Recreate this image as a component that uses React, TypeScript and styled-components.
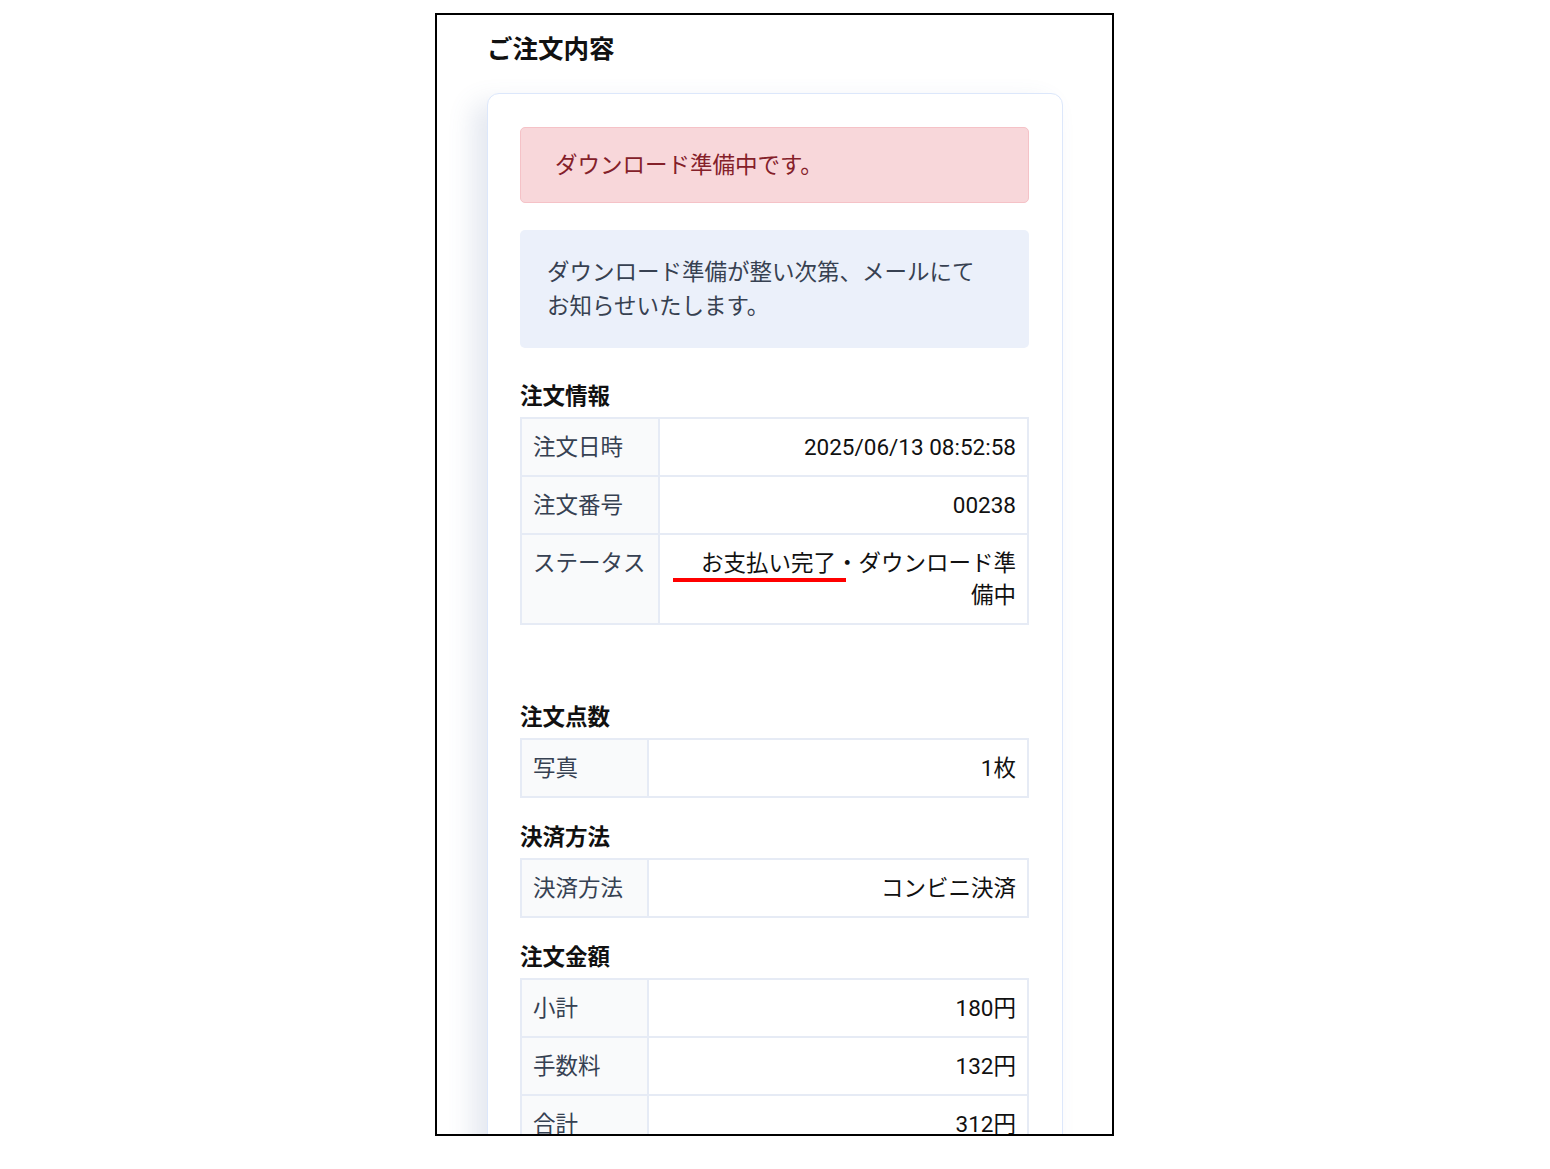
import React from 'react';
import styled, {createGlobalStyle} from 'styled-components';

const GlobalStyle = createGlobalStyle`
  body {
    margin: 0;
    background: #fff;
    font-family: Roboto, "Noto Sans CJK JP", sans-serif;
  }
`;

const Frame = styled.div`
  box-sizing: border-box;
  width: 679px;
  height: 1123px;
  margin: 13px 0 0 435px;
  border: 2px solid #000;
  overflow: hidden;
  padding: 0 49px 0 50px;
  background: #fff;
`;

const Title = styled.h1`
  margin: 16px 0 26px;
  font-size: 25.5px;
  line-height: 36px;
  font-weight: 700;
  color: #111;
`;

const Card = styled.div`
  border: 1px solid #dce7fb;
  border-radius: 12px;
  padding: 33px 33px 60px 32px;
  background: #fff;
  box-shadow: -14px 10px 26px rgba(90, 110, 160, 0.16);
`;

const Alert = styled.div<{$tone: 'danger' | 'info'}>`
  box-sizing: border-box;
  border-radius: 5px;
  font-size: 22.5px;
  line-height: 34px;
  ${(p) =>
    p.$tone === 'danger'
      ? `
    background: #f8d7da;
    border: 1px solid #f5c2c7;
    color: #842029;
    padding: 20px 34px;
  `
      : `
    background: #ebf0fa;
    color: #374151;
    padding: 25px 27px;
    margin-top: 27px;
  `}
`;

const Section = styled.section<{$gap: number}>`
  margin-top: ${(p) => p.$gap}px;
`;

const Heading = styled.h2`
  margin: 0 0 5px;
  font-size: 22.5px;
  line-height: 32px;
  font-weight: 700;
  color: #111;
`;

const Table = styled.table`
  width: 100%;
  border-collapse: collapse;
  font-size: 22.5px;
  line-height: 32px;
`;

const Label = styled.th`
  width: 25%;
  border: 2px solid #e6ebf5;
  background: #f9fafb;
  color: #364152;
  font-weight: 400;
  text-align: left;
  vertical-align: top;
  padding: 12px 12px 12px 11px;
  white-space: nowrap;
`;

const Value = styled.td`
  border: 2px solid #e6ebf5;
  color: #111;
  text-align: right;
  vertical-align: top;
  padding: 12px 11px 12px 20px;
`;

// red marker drawn under the payment status
const Marked = styled.span`
  position: relative;

  &::after {
    content: '';
    position: absolute;
    left: -28px;
    bottom: -6px;
    width: 173px;
    height: 4px;
    background: #f00;
  }
`;

type Row = {label: string; value: React.ReactNode};

const sections: {title: string; gap: number; rows: Row[]}[] = [
  {
    title: '注文情報',
    gap: 32,
    rows: [
      {label: '注文日時', value: '2025/06/13 08:52:58'},
      {label: '注文番号', value: '00238'},
      {
        label: 'ステータス',
        value: (
          <>
            <Marked>お支払い完了</Marked>・ダウンロード準備中
          </>
        ),
      },
    ],
  },
  {title: '注文点数', gap: 76, rows: [{label: '写真', value: '1枚'}]},
  {title: '決済方法', gap: 23, rows: [{label: '決済方法', value: 'コンビニ決済'}]},
  {
    title: '注文金額',
    gap: 23,
    rows: [
      {label: '小計', value: '180円'},
      {label: '手数料', value: '132円'},
      {label: '合計', value: '312円'},
    ],
  },
];

export default function App() {
  return (
    <>
      <GlobalStyle />
      <Frame>
        <Title>ご注文内容</Title>
        <Card>
          <Alert $tone="danger">ダウンロード準備中です。</Alert>
          <Alert $tone="info">
            ダウンロード準備が整い次第、メールにて
            <br />
            お知らせいたします。
          </Alert>
          {sections.map((s) => (
            <Section key={s.title} $gap={s.gap}>
              <Heading>{s.title}</Heading>
              <Table>
                <tbody>
                  {s.rows.map((r) => (
                    <tr key={r.label}>
                      <Label>{r.label}</Label>
                      <Value>{r.value}</Value>
                    </tr>
                  ))}
                </tbody>
              </Table>
            </Section>
          ))}
        </Card>
      </Frame>
    </>
  );
}
